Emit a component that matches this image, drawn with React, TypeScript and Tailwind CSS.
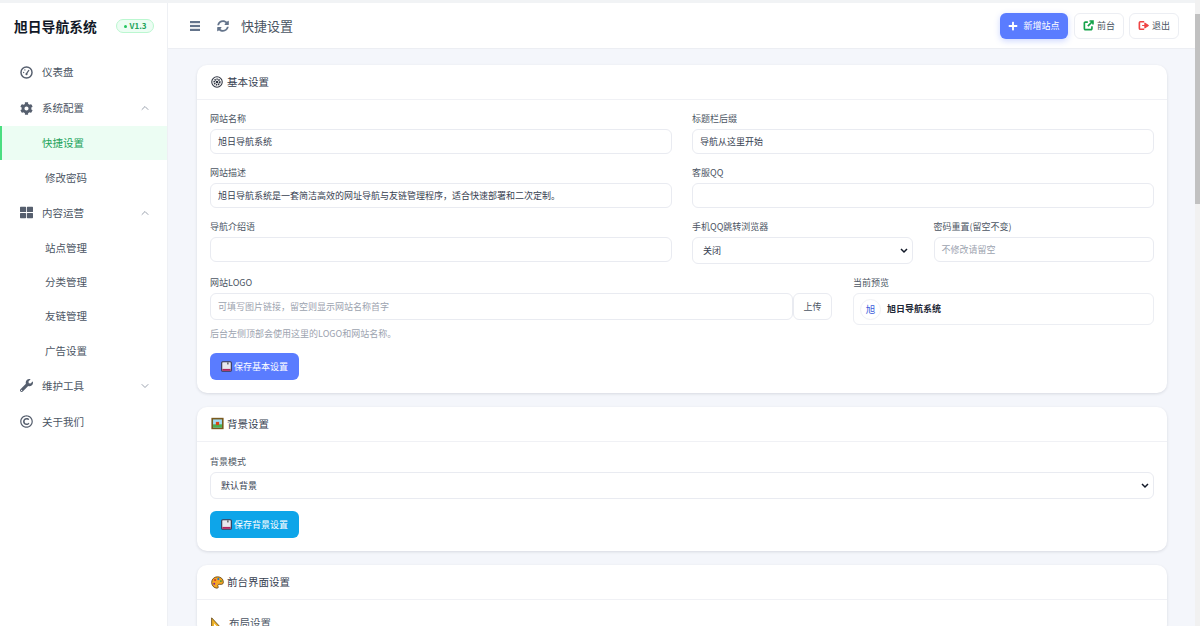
import React from "react";
import { FaWrench, FaCog, FaThLarge, FaPlus, FaSyncAlt, FaRegCopyright } from "react-icons/fa";
import { FiChevronUp, FiChevronDown } from "react-icons/fi";

const font = { fontFamily: '"Noto Sans CJK SC", "Liberation Sans", sans-serif' };

function Floppy() {
  return (
    <svg width="11" height="11" viewBox="0 0 16 16" className="shrink-0">
      <rect x="1" y="1" width="14" height="14" rx="1.5" fill="#e8e8ee" stroke="#33334d" strokeWidth="1.600" />
      <rect x="2" y="11.500" width="12" height="2.800" fill="#b0245f" />
      <rect x="9" y="2" width="2" height="3" fill="#555" />
    </svg>
  );
}

function Picture() {
  return (
    <svg width="13" height="13" viewBox="0 0 16 16" className="shrink-0">
      <rect x="0.5" y="1" width="15" height="14" fill="#7a5a1e" />
      <rect x="2.500" y="3" width="11" height="10" fill="#9fdcf5" />
      <rect x="2.500" y="9" width="11" height="4" fill="#4caf50" />
      <rect x="6" y="6" width="4" height="4" fill="#d84315" />
    </svg>
  );
}

function Palette() {
  return (
    <svg width="13" height="13" viewBox="0 0 16 16" className="shrink-0">
      <path d="M8 1C3.800 1 .8 4 .8 8c0 3.600 3 7 6.600 7 1.600 0 1.800-1.400 1.200-2.400-.7-1.200 0-2.300 1.400-2.300h2.600c1.600 0 2.600-1 2.600-2.700C15.200 3.600 12 1 8 1z" fill="#f5a623" stroke="#4a3208" strokeWidth="0.9" />
      <circle cx="5" cy="5" r="1.300" fill="#d32f2f" />
      <circle cx="9" cy="3.800" r="1.300" fill="#1976d2" />
      <circle cx="12.200" cy="6.300" r="1.200" fill="#388e3c" />
      <circle cx="4" cy="9.500" r="1.200" fill="#7b1fa2" />
    </svg>
  );
}

function Ruler() {
  return (
    <svg width="13" height="13" viewBox="0 0 16 16" className="shrink-0">
      <path d="M2 1v14h13z" fill="#f0b429" stroke="#5c3d0c" strokeWidth="1" />
      <path d="M5 8v4h4z" fill="#fff" />
    </svg>
  );
}

function GearCircle() {
  return (
    <svg width="12" height="12" viewBox="0 0 16 16" className="shrink-0 mr-[1px]">
      <circle cx="8" cy="8" r="7" fill="none" stroke="#2f3542" strokeWidth="1.400" />
      <circle cx="8" cy="8" r="3.700" fill="none" stroke="#2f3542" strokeWidth="2.200" strokeDasharray="1.800 0.900" />
      <circle cx="8" cy="8" r="1.800" fill="#2f3542" />
    </svg>
  );
}

function Gauge() {
  return (
    <svg width="13" height="13" viewBox="0 0 16 16">
      <circle cx="8" cy="8" r="6.800" fill="none" stroke="currentColor" strokeWidth="1.800" />
      <path d="M8 9.500L10.800 5.500" stroke="currentColor" strokeWidth="1.500" strokeLinecap="round" />
      <circle cx="8" cy="10" r="1.300" fill="currentColor" />
      <circle cx="4.500" cy="8" r="0.800" fill="currentColor" />
      <circle cx="6" cy="4.800" r="0.800" fill="currentColor" />
    </svg>
  );
}

function Bars() {
  return (
    <svg width="10" height="10" viewBox="0 0 10 10" className="shrink-0">
      <rect x="0" y="0" width="10" height="2.200" fill="#64748b" />
      <rect x="0" y="3.900" width="10" height="2.200" fill="#64748b" />
      <rect x="0" y="7.800" width="10" height="2.200" fill="#64748b" />
    </svg>
  );
}

function External() {
  return (
    <svg width="11" height="11" viewBox="0 0 16 16" className="shrink-0">
      <path d="M7 3H3.500A1.500 1.500 0 0 0 2 4.500v8A1.500 1.500 0 0 0 3.500 14h8a1.500 1.500 0 0 0 1.500-1.500V9" fill="none" stroke="#16a34a" strokeWidth="2.400" />
      <path d="M7 9l7-7M9.500 1.500H14.500V6.500" fill="none" stroke="#16a34a" strokeWidth="2.400" />
    </svg>
  );
}

function Exit() {
  return (
    <svg width="11" height="11" viewBox="0 0 16 16" className="shrink-0">
      <path d="M9 2.500H3.500A1.500 1.500 0 0 0 2 4v8a1.500 1.500 0 0 0 1.500 1.500H9" fill="none" stroke="#ef4444" strokeWidth="2.400" />
      <path d="M6 8h5M10 4.500L15 8l-5 3.500z" fill="#ef4444" stroke="#ef4444" strokeWidth="1.600" strokeLinejoin="round" />
    </svg>
  );
}

function NavItem({ icon, label, chevron }: { icon: React.ReactNode; label: string; chevron?: "up" | "down" }) {
  return (
    <div className="h-[36px] flex items-center pl-[20px] pr-[16px] text-[10.500px] text-[#4b5563]">
      <span className="w-[13px] flex justify-center text-[#565f6e] text-[13px]">{icon}</span>
      <span className="ml-[9px] flex-1">{label}</span>
      {chevron === "up" && <FiChevronUp className="text-[#9ca3af] text-[12px]" />}
      {chevron === "down" && <FiChevronDown className="text-[#9ca3af] text-[12px]" />}
    </div>
  );
}

function SubItem({ label, active }: { label: string; active?: boolean }) {
  return active ? (
    <div className="h-[34.250px] flex items-center pl-[40px] text-[10.500px] text-[#22a35a] bg-[#ecfdf3] border-l-2 border-[#4ade80]">{label}</div>
  ) : (
    <div className="h-[34.250px] flex items-center pl-[45px] text-[10.500px] text-[#4b5563]">{label}</div>
  );
}

function FieldLabel({ children }: { children: React.ReactNode }) {
  return <div className="h-[13px] pt-[1px] leading-[12px] text-[9px] text-[#4b5563] mb-[4px]">{children}</div>;
}

function Field({ label, value, placeholder, className = "" }: { label: string; value?: string; placeholder?: string; className?: string }) {
  return (
    <div className={className}>
      <FieldLabel>{label}</FieldLabel>
      <div className={`h-[25px] pt-[1px] rounded-[6px] border border-[#e9ebf1] bg-white flex items-center px-[7px] text-[9px] ${value ? "text-[#374151]" : "text-[#9ca3af]"}`}>
        {value || placeholder}
      </div>
    </div>
  );
}

function SelectBox({ label, value, className = "" }: { label: string; value: string; className?: string }) {
  return (
    <div className={className}>
      <FieldLabel>{label}</FieldLabel>
      <div className="h-[27px] pt-[1px] rounded-[6px] border border-[#e9ebf1] bg-white flex items-center justify-between pl-[10px] pr-[4px] text-[9px] text-[#374151]">
        <span>{value}</span>
        <svg width="8" height="6" viewBox="0 0 8 6"><path d="M1 1l3 3 3-3" fill="none" stroke="#111827" strokeWidth="1.500" /></svg>
      </div>
    </div>
  );
}

function Card({ icon, title, children }: { icon: React.ReactNode; title: string; children: React.ReactNode }) {
  return (
    <div className="bg-white rounded-[10px] shadow-[0_1px_3px_rgba(15,23,42,0.12)] mb-[14px]">
      <div className="h-[35px] border-b border-[#f0f1f5] flex items-center gap-[3px] px-[14px] text-[10.500px] text-[#374151]">
        {icon}
        <span>{title}</span>
      </div>
      {children}
    </div>
  );
}

function SaveButton({ label, color }: { label: string; color: string }) {
  return (
    <div className={`h-[27px] w-[89px] rounded-[6px] ${color} flex items-center justify-center gap-[2px] text-[9px] text-white`}>
      <Floppy />
      <span>{label}</span>
    </div>
  );
}

const DESCRIPTION = "旭日导航系统是一套简洁高效的网址导航与友链管理程序\uFF0C适合快速部署和二次定制。";
const LOGO_HINT = "可填写图片链接\uFF0C留空则显示网站名称首字";

export default function App() {
  return (
    <div className="h-[626px] w-[1200px] flex overflow-hidden bg-[#f4f6fb]" style={font}>
      <div className="flex-1 min-w-0 flex flex-col">
        <div className="h-[3px] bg-[#f1f3f5] shrink-0" />
        <div className="flex flex-1 min-h-0">
          <aside className="w-[168px] shrink-0 bg-white border-r border-[#eef0f4]">
            <div className="h-[46px] flex items-center pl-[14px] pr-[13px] justify-between">
              <span className="text-[13.800px] font-bold text-[#111827]">旭日导航系统</span>
              <span className="h-[14px] w-[38px] rounded-full bg-[#ecfdf3] border border-[#bbf7d0] flex items-center justify-center gap-[3px] text-[8px] font-bold text-[#22a35a]">
                <span className="w-[3px] h-[3px] rounded-full bg-[#22c55e]" />V1.3
              </span>
            </div>
            <div className="pt-[5px]">
              <NavItem icon={<Gauge />} label="仪表盘" />
              <NavItem icon={<FaCog />} label="系统配置" chevron="up" />
              <SubItem label="快捷设置" active />
              <SubItem label="修改密码" />
              <NavItem icon={<FaThLarge />} label="内容运营" chevron="up" />
              <SubItem label="站点管理" />
              <SubItem label="分类管理" />
              <SubItem label="友链管理" />
              <SubItem label="广告设置" />
              <NavItem icon={<FaWrench />} label="维护工具" chevron="down" />
              <NavItem icon={<FaRegCopyright />} label="关于我们" />
            </div>
          </aside>
          <div className="flex-1 min-w-0 flex flex-col">
            <header className="h-[46px] shrink-0 bg-white border-b border-[#eceef3] flex items-center pl-[22px] pr-[16px]">
              <Bars />
              <FaSyncAlt className="text-[#64748b] text-[12px] ml-[17px]" />
              <span className="ml-[12px] text-[13px] text-[#4b5563]">快捷设置</span>
              <div className="ml-auto flex items-center gap-[5px]">
                <div className="h-[26px] w-[68px] mr-[1px] rounded-[6px] bg-[#5a7cff] shadow-[0_2px_6px_rgba(90,124,255,0.3)] flex items-center justify-center gap-[5px] text-[9px] text-white">
                  <FaPlus className="text-[10px]" />新增站点
                </div>
                <div className="h-[26px] w-[50px] rounded-[6px] bg-white border border-[#eceef3] flex items-center justify-center gap-[3px] text-[9px] text-[#4b5563]">
                  <External />前台
                </div>
                <div className="h-[26px] w-[50px] rounded-[6px] bg-white border border-[#eceef3] flex items-center justify-center gap-[3px] text-[9px] text-[#4b5563]">
                  <Exit />退出
                </div>
              </div>
            </header>
            <main className="flex-1 min-h-0 overflow-hidden pl-[29px] pr-[28px] pt-[16px]">
              <Card icon={<GearCircle />} title="基本设置">
                <div className="px-[13px] pt-[12px] pb-[12.500px]">
                  <div className="grid grid-cols-2 gap-x-[20px] gap-y-[12px]">
                    <Field label="网站名称" value="旭日导航系统" />
                    <Field label="标题栏后缀" value="导航从这里开始" />
                    <Field label="网站描述" value={DESCRIPTION} />
                    <Field label="客服QQ" />
                    <Field label="导航介绍语" />
                    <div className="grid grid-cols-2 gap-x-[21px]">
                      <SelectBox label="手机QQ跳转浏览器" value="关闭" />
                      <Field label="密码重置(留空不变)" placeholder="不修改请留空" />
                    </div>
                  </div>
                  <div className="flex gap-[21px] mt-[12px]">
                    <div className="flex-1 min-w-0">
                      <FieldLabel>网站LOGO</FieldLabel>
                      <div className="flex">
                        <div className="flex-1 h-[27px] pt-[1px] rounded-[6px] border border-[#e9ebf1] flex items-center px-[7px] text-[9px] text-[#9ca3af]">{LOGO_HINT}</div>
                        <div className="w-[39px] h-[27px] rounded-[6px] border border-[#e9ebf1] flex items-center justify-center text-[9px] text-[#4b5563]">上传</div>
                      </div>
                      <div className="mt-[8px] h-[12px] leading-[12px] text-[9px] text-[#9ca3af]">后台左侧顶部会使用这里的LOGO和网站名称。</div>
                    </div>
                    <div className="w-[301px] shrink-0">
                      <FieldLabel>当前预览</FieldLabel>
                      <div className="h-[32px] rounded-[6px] border border-[#eceef3] flex items-center pl-[6px] gap-[6px]">
                        <span className="w-[21px] h-[21px] rounded-full border border-[#f0f1f5] flex items-center justify-center text-[9.500px] text-[#3b5bdb]">旭</span>
                        <span className="text-[9px] font-bold text-[#1f2937]">旭日导航系统</span>
                      </div>
                    </div>
                  </div>
                  <div className="mt-[13px]">
                    <SaveButton label="保存基本设置" color="bg-[#5a7cff]" />
                  </div>
                </div>
              </Card>
              <Card icon={<Picture />} title="背景设置">
                <div className="px-[13px] pt-[13px] pb-[13px]">
                  <SelectBox label="背景模式" value="默认背景" />
                  <div className="mt-[12.500px]">
                    <SaveButton label="保存背景设置" color="bg-[#0ea5e9]" />
                  </div>
                </div>
              </Card>
              <Card icon={<Palette />} title="前台界面设置">
                <div className="px-[13px] pt-[16px] pb-[4px]">
                  <div className="flex items-center gap-[6px] text-[10.500px] leading-[14px] text-[#4b5563]">
                    <Ruler />
                    <span>布局设置</span>
                  </div>
                </div>
              </Card>
            </main>
          </div>
        </div>
      </div>
      <div className="w-[5px] shrink-0 bg-[#f1f1f1] flex flex-col pt-[14px]">
        <div className="h-[190px] bg-[#c1c1c1]" />
      </div>
    </div>
  );
}
